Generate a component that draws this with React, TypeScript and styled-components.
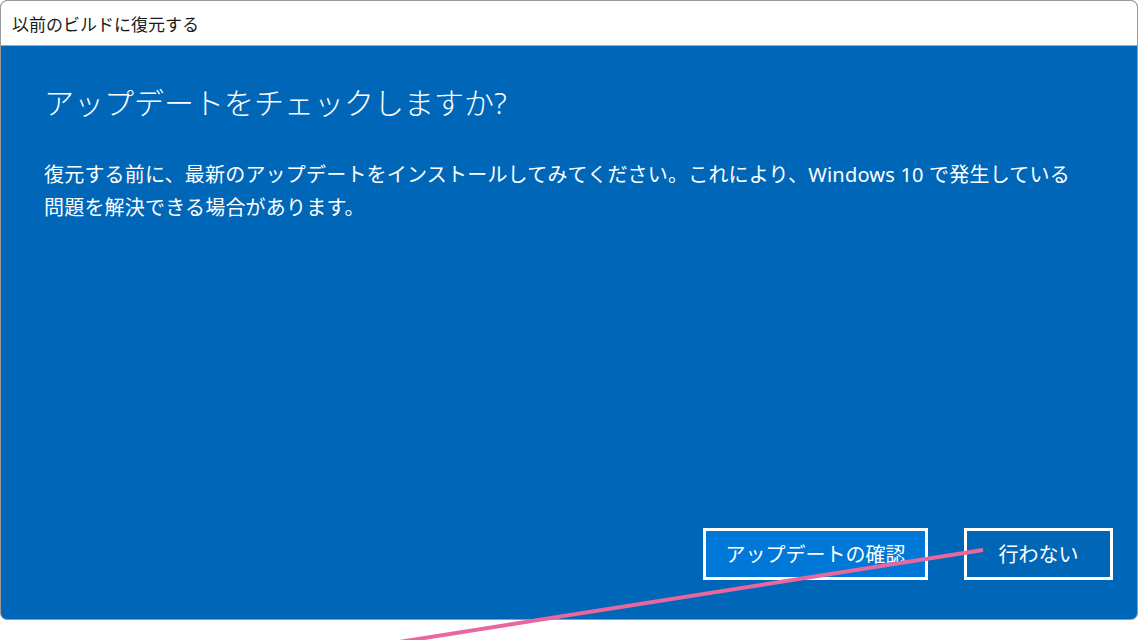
import React from "react";
import styled, { createGlobalStyle } from "styled-components";

const Global = createGlobalStyle`
  html, body { margin: 0; padding: 0; background: #ffffff; }
  body { width: 1138px; height: 640px; overflow: hidden; position: relative;
    font-family: "Noto Sans", "Noto Sans CJK JP", sans-serif; }
`;

const Window = styled.div`
  box-sizing: border-box;
  width: 1138px;
  height: 620px;
  border: 1px solid #9a9a9a;
  border-radius: 7px;
  overflow: hidden;
  display: flex;
  flex-direction: column;
  background: #0067b8;
`;

const TitleBar = styled.div`
  height: 44px;
  flex: none;
  background: #ffffff;
  border-bottom: 1px solid #7fb3dc;
  display: flex;
  align-items: center;
  padding-left: 11px;
  font-size: 17px;
  color: #1a1a1a;
`;

const Content = styled.div`
  flex: 1;
  display: flex;
  flex-direction: column;
  padding: 35px 24px 39px 43px;
  color: #ffffff;
`;

const Heading = styled.h1`
  margin: 0;
  font-size: 30px;
  font-weight: 300;
  line-height: 44px;
`;

const Body = styled.p`
  margin: 33px 0 0 0;
  font-size: 20px;
  font-weight: 400;
  line-height: 33px;
  letter-spacing: 0.2px;
`;

const Spacer = styled.div`
  flex: 1;
`;

const Buttons = styled.div`
  display: flex;
  justify-content: flex-end;
  gap: 36px;
`;

const Button = styled.button<{ $primary?: boolean }>`
  box-sizing: border-box;
  height: 52px;
  width: ${(p) => (p.$primary ? "225px" : "149px")};
  border: 3px solid #ffffff;
  background: ${(p) => (p.$primary ? "#0078d7" : "#0067b8")};
  color: #ffffff;
  font-family: inherit;
  font-size: 20px;
  font-weight: 400;
  padding: 0 0 2px 0;
  cursor: pointer;
`;

const Overlay = styled.svg`
  position: absolute;
  left: 0;
  top: 0;
  pointer-events: none;
`;

export default function App() {
  return (
    <>
      <Global />
      <Window>
        <TitleBar>以前のビルドに復元する</TitleBar>
        <Content>
          <Heading>アップデートをチェックしますか?</Heading>
          <Body>
            復元する前に、最新のアップデートをインストールしてみてください。これにより、Windows 10 で発生している
            <br />
            問題を解決できる場合があります。
          </Body>
          <Spacer />
          <Buttons>
            <Button $primary>アップデートの確認</Button>
            <Button>行わない</Button>
          </Buttons>
        </Content>
      </Window>
      <Overlay width="1138" height="640" viewBox="0 0 1138 640">
        <line x1="983" y1="550" x2="380" y2="645" stroke="#e8679f" strokeWidth="4" />
      </Overlay>
    </>
  );
}
